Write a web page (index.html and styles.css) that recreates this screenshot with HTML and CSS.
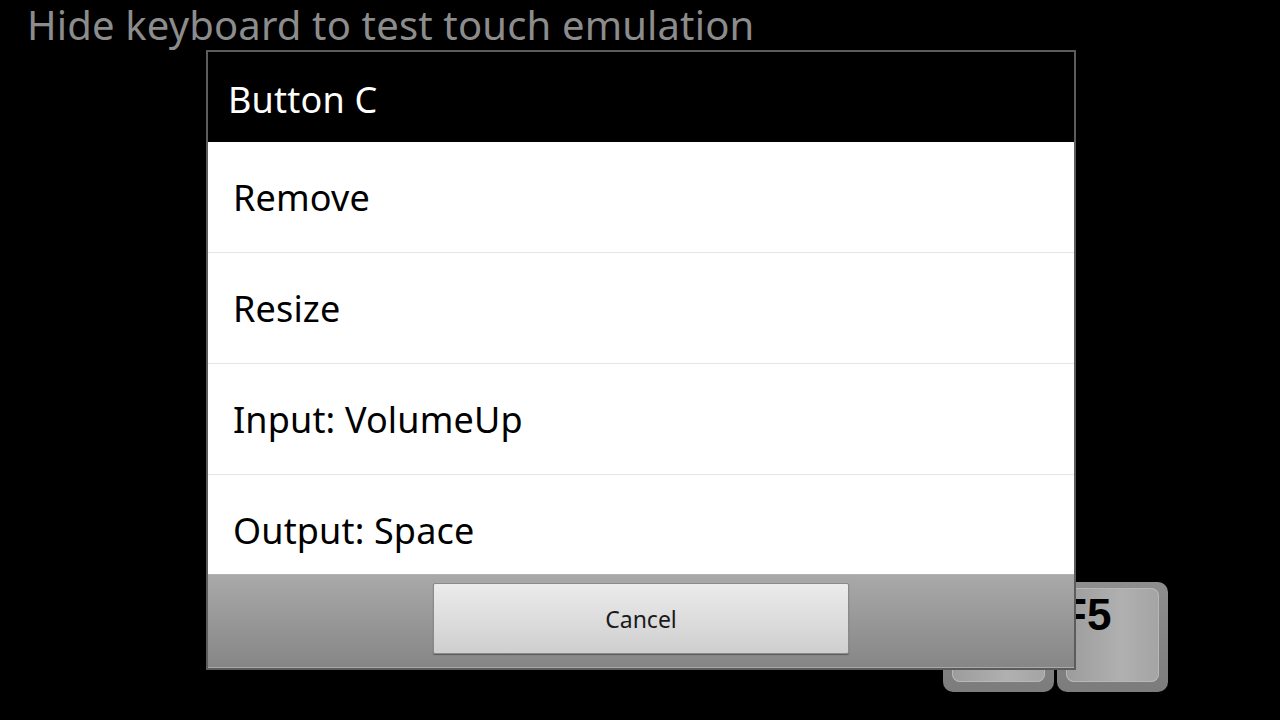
FILE: index.html
```html
<!DOCTYPE html>
<html lang="en">
<head>
  <meta charset="UTF-8" />
  <meta name="viewport" content="width=device-width, initial-scale=1.0" />
  <title>Touch Controls</title>
  <link rel="stylesheet" href="styles.css">
</head>
<body>
  <div class="screen">
    <div class="hint">Hide keyboard to test touch emulation</div>
    <div class="keyrow">
      <div class="key"><div class="key-face"></div></div>
      <div class="key"><div class="key-face">F5</div></div>
    </div>
  </div>

  <div class="dialog">
    <div class="dialog-title">Button C</div>
    <div class="dialog-list">
      <div class="item">Remove</div>
      <div class="item">Resize</div>
      <div class="item">Input: VolumeUp</div>
      <div class="item">Output: Space</div>
    </div>
    <div class="dialog-footer">
      <button class="btn">Cancel</button>
    </div>
  </div>
</body>
</html>
```

FILE: styles.css
```css
body {
  margin: 0;
  background-color: #000;
  font-family: 'Noto Sans', 'Open Sans', sans-serif;
  overflow: hidden;
}
.screen {
  height: 720px;
  display: flex;
  flex-direction: column;
}
.hint {
  color: #8c8c8c;
  font-size: 40px;
  line-height: 44px;
  padding: 3px 0 0 27px;
  letter-spacing: 0.15px;
}
.keyrow {
  margin-top: auto;
  margin-bottom: 28px;
  margin-right: 112px;
  align-self: flex-end;
  display: flex;
  gap: 3px;
}
.key {
  width: 111px;
  height: 110px;
  box-sizing: border-box;
  padding: 6px 9px 10px 9px;
  border-radius: 10px;
  background: linear-gradient(#8e8e8e, #7c7c7c);
}
.key-face {
  height: 100%;
  border-radius: 8px;
  background: linear-gradient(90deg, #9c9c9c, #b0b0b0 60%, #a4a4a4);
  box-shadow: inset 0 0 0 1px #b8b8b8;
  font-family: 'Liberation Sans', Arial, sans-serif;
  font-weight: bold;
  font-size: 44px;
  line-height: 1;
  color: #000;
  padding: 5px 0 0 0;
  box-sizing: border-box;
  text-indent: -6px;
}

/* modal */
.dialog {
  position: absolute;
  left: 206px;
  top: 50px;
  width: 870px;
  height: 620px;
  box-sizing: border-box;
  border: 2px solid #5c5c5c;
  display: flex;
  flex-direction: column;
  background: #fff;
}
.dialog-title {
  height: 90px;
  box-sizing: border-box;
  padding: 6px 0 0 20px;
  background: #000;
  color: #fff;
  font-size: 36px;
  line-height: 84px;
  letter-spacing: 0.2px;
}
.dialog-list {
  height: 432px;
  overflow: hidden;
}
.item {
  height: 111px;
  box-sizing: border-box;
  padding: 2px 0 0 25px;
  line-height: 108px;
  border-bottom: 1px solid #e6e6e6;
  font-size: 36px;
  color: #000;
  letter-spacing: 0.15px;
}
.dialog-footer {
  flex: 1;
  background: linear-gradient(#a9a9a9, #868686);
  border-top: 1px solid #b4b4b4;
  border-bottom: 1px solid #a8a8a8;
  display: flex;
  justify-content: center;
  padding-top: 8px;
}
.btn {
  width: 416px;
  height: 71px;
  border: 1px solid #8a8a8a;
  border-radius: 2px;
  background: linear-gradient(#ebebeb, #cfcfcf);
  box-shadow: 0 1px 1px rgba(0,0,0,0.35);
  font-family: 'Noto Sans', 'Open Sans', sans-serif;
  font-size: 23px;
  color: #1a1a1a;
}
```
